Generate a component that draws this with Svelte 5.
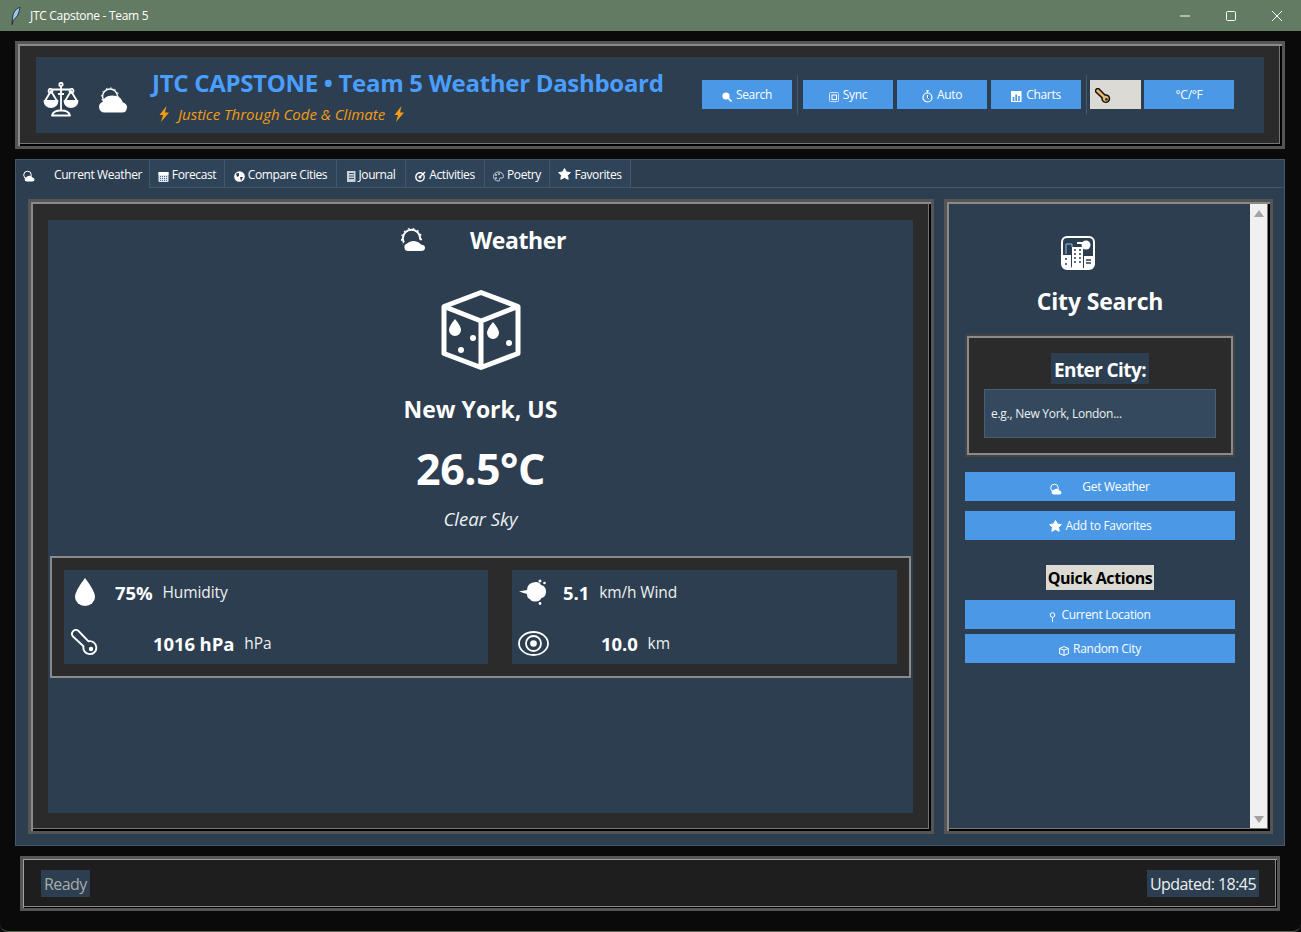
<script>
    const tabs = [
        { label: 'Current Weather', icon: 'weather', active: true },
        { label: 'Forecast', icon: 'calendar' },
        { label: 'Compare Cities', icon: 'globe' },
        { label: 'Journal', icon: 'journal' },
        { label: 'Activities', icon: 'dart' },
        { label: 'Poetry', icon: 'palette' },
        { label: 'Favorites', icon: 'star' }
    ];

    const actions = [
        { label: 'Search', icon: 'search' },
        { sep: true },
        { label: 'Sync', icon: 'sync' },
        { label: 'Auto', icon: 'watch' },
        { label: 'Charts', icon: 'chart' },
        { sep: true, tight: true },
        { key: true },
        { label: '°C/°F' }
    ];
</script>

{#snippet icon(name)}
    {#if name === 'weather'}
        <svg class="ic" width="12" height="12" viewBox="0 0 12 12"><circle cx="4.500" cy="5" r="3.800" fill="none" stroke="#fff"/><path d="M4 11.500a2.200 2.200 0 0 1-.3-4.400Q5 5.200 7.500 5.800 9 6.300 9.500 7.500 11.500 8 11.500 9.700 11.500 11.500 9.500 11.500z" fill="#fff"/></svg>
    {:else if name === 'calendar'}
        <svg class="ic" width="11" height="11" viewBox="0 0 11 11"><rect x=".5" y="1" width="10" height="10" rx="1" fill="#dfe6ee"/><rect x=".5" y="1" width="10" height="3" fill="#fff"/><path d="M2 5.500h7M2 7.500h7M2 9.500h7" stroke="#4d6a88" stroke-dasharray="1 1"/></svg>
    {:else if name === 'globe'}
        <svg class="ic" width="11" height="11" viewBox="0 0 11 11"><circle cx="5.500" cy="5.500" r="5.300" fill="#fff"/><path d="M2 2.500 5 2 5 5 3 6zM6 6l3 0-2 4z" fill="#2c3e50"/></svg>
    {:else if name === 'journal'}
        <svg class="ic" width="9" height="11" viewBox="0 0 9 11"><rect width="8.500" height="11" fill="#c8d0d8"/><path d="M2 2.500h5M2 5h5M2 7.500h5" stroke="#3c4e60"/></svg>
    {:else if name === 'dart'}
        <svg class="ic" width="11" height="11" viewBox="0 0 11 11"><circle cx="5" cy="6" r="4.200" fill="none" stroke="#fff" stroke-width="1.400"/><circle cx="5" cy="6" r="1.500" fill="#fff"/><path d="M5 6 10 1" stroke="#fff" stroke-width="1.200"/></svg>
    {:else if name === 'palette'}
        <svg class="ic" width="11" height="11" viewBox="0 0 11 11"><path d="M5.500 1a5 4.500 0 1 0 0 9q1.500 0 1-1.500-.5-1.500 1-1.500h1.500q1.500 0 1.500-1.500Q10 1 5.500 1z" fill="none" stroke="#ccd"/><circle cx="3" cy="4" r="1" fill="#ccd"/><circle cx="6" cy="3" r="1" fill="#ccd"/><circle cx="3" cy="7" r="1" fill="#ccd"/></svg>
    {:else if name === 'star'}
        <svg class="ic star" width="13" height="12" viewBox="0 0 13 12"><path d="M6.500.5 8.400 4l4 .6-2.900 2.700.7 4-3.700-1.900-3.700 1.900.7-4L.6 4.600l4-.6z" fill="#fff" stroke="#fff" stroke-linejoin="round"/></svg>
    {:else if name === 'search'}
        <svg class="ic" width="10" height="10" viewBox="0 0 10 10"><circle cx="4" cy="4" r="3.600" fill="#fff"/><path d="M6 6l3.500 3.500" stroke="#fff" stroke-width="1.600"/></svg>
    {:else if name === 'sync'}
        <svg class="ic" width="10" height="10" viewBox="0 0 10 10"><rect x=".5" y=".5" width="9" height="9" rx="1" fill="none" stroke="#cfe4fa"/><rect x="3" y="3" width="4.500" height="4.500" fill="none" stroke="#fff"/></svg>
    {:else if name === 'watch'}
        <svg class="ic" width="11" height="13" viewBox="0 0 11 13"><circle cx="5.500" cy="7.500" r="4.500" fill="none" stroke="#fff" stroke-width="1.200"/><path d="M4 .8h3M5.500 1v2M5.500 5v3l1.500 1" stroke="#fff"/></svg>
    {:else if name === 'chart'}
        <svg class="ic" width="11" height="11" viewBox="0 0 11 11"><rect width="10.500" height="11" fill="#fff"/><path d="M2.500 10V6M5.200 10V3.500M8 10V5" stroke="#4a98e6" stroke-width="1.700"/></svg>
    {:else if name === 'pin'}
        <svg class="ic" width="7" height="10" viewBox="0 0 7 10"><circle cx="3.500" cy="3" r="2.300" fill="none" stroke="#fff"/><path d="M3.500 5.500V10" stroke="#fff"/></svg>
    {:else if name === 'cube'}
        <svg class="ic" width="10" height="10" viewBox="0 0 10 10"><path d="M5 .6 9.400 2.400V7.600L5 9.400.6 7.600V2.400zM.6 2.400 5 4.200 9.400 2.400M5 4.200V9.400" fill="none" stroke="#fff"/></svg>
    {:else if name === 'bolt'}
        <svg class="bolt" width="12" height="16" viewBox="0 0 12 16"><path d="M8.500 0 1.500 9H5L3 16 11 6.500H7z" fill="#f39c12"/></svg>
    {:else if name === 'thermo'}
        <svg width="28" height="28" viewBox="0 0 28 28"><path d="M2 7.500a3.900 3.900 0 0 1 5.500-5.500L17.500 12.300a6.500 6.500 0 1 1-5 5z" fill="none" stroke="#fff" stroke-width="1.900" stroke-linejoin="round"/><circle cx="20" cy="20" r="2.200" fill="#fff"/></svg>
    {/if}
{/snippet}

{#snippet cloudBig()}
    <svg width="28" height="26" viewBox="0 0 28 26">
        <circle cx="11" cy="9.500" r="7.500" fill="none" stroke="#fff" stroke-width="1.500"/>
        <circle cx="11" cy="9.500" r="8.600" fill="none" stroke="#fff" stroke-width="1" stroke-dasharray="1.500 3"/>
        <path d="M5.500 25.500a5.500 5.500 0 0 1-2-10.600Q5 9 13 8.500q9 0 11 7 4 1.500 4 4.500 0 5.500-5 5.500z" fill="#fff"/>
    </svg>
{/snippet}

{#snippet cloudSmall()}
    <svg width="26" height="24" viewBox="0 0 26 24">
        <circle cx="11.500" cy="10.500" r="8.700" fill="none" stroke="#fff" stroke-width="2"/>
        <circle cx="11.500" cy="10.500" r="10" fill="none" stroke="#fff" stroke-width="1.200" stroke-dasharray="1.800 3"/>
        <path d="M7 24a6 6 0 0 1-2-10.500Q8 10 14 10q6 .5 8 4 4 1 4 4.500 0 5.500-5 5.500z" fill="#2c3e50"/>
        <path d="M8 23a3.800 3.800 0 0 1-1-7.400Q10 12.500 14 13q5 .5 7 3.500 4 .5 4 3.300 0 3.200-4 3.200z" fill="#fff"/>
    </svg>
{/snippet}

<div class="window">
    <div class="titlebar">
        <svg class="feather" width="10" height="18" viewBox="0 0 10 18"><path d="M9 0Q2 3 1.500 11L1 17.500 2.500 13Q8 9 9 0z" fill="#9ec5ee" stroke="#10202e" stroke-width=".8"/></svg>
        <span class="wintitle">JTC Capstone - Team 5</span>
        <div class="winbtns">
            <span><svg width="10" height="10" viewBox="0 0 10 10"><path d="M0 5h10" stroke="#fff"/></svg></span>
            <span><svg width="10" height="10" viewBox="0 0 10 10"><rect x=".5" y=".5" width="9" height="9" rx="1" fill="none" stroke="#fff"/></svg></span>
            <span><svg width="10" height="10" viewBox="0 0 10 10"><path d="M0 0l10 10M10 0 0 10" stroke="#fff"/></svg></span>
        </div>
    </div>

    <div class="content">
        <header class="frame header">
            <div class="header-panel">
                <svg class="scales" width="36" height="35" viewBox="0 0 36 35">
                    <g fill="none" stroke="#fff" stroke-width="1.800" stroke-linejoin="round">
                        <circle cx="18" cy="2.500" r="1.700"/>
                        <path d="M18 4.500V29M9 7.500h18M9 7.500a2 2 0 1 1-.1-.1M27 7.500a2 2 0 1 0 .1-.1"/>
                        <path d="M2 19 8 9l6 10M22 19l6-10 6 10M15 12h6"/>
                        <path d="M1.500 19a6.500 6 0 0 0 13 0zM21.500 19a6.500 6 0 0 0 13 0z" fill="#fff"/>
                        <path d="M9 33.500q1-5 9-5t9 5z"/>
                    </g>
                </svg>
                <span class="cloud">{@render cloudBig()}</span>
                <div class="brand">
                    <h1>JTC CAPSTONE • Team 5 Weather Dashboard</h1>
                    <p>{@render icon('bolt')}<span>Justice Through Code &amp; Climate</span>{@render icon('bolt')}</p>
                </div>
                <div class="actions">
                    {#each actions as a}
                        {#if a.sep}
                            <i class="sep" class:tight={a.tight}></i>
                        {:else if a.key}
                            <button class="keybtn" aria-label="Temperature">
                                <svg width="16" height="16" viewBox="0 0 28 28"><path d="M2 7.500a3.900 3.900 0 0 1 5.500-5.500L17.500 12.300a6.500 6.500 0 1 1-5 5z" fill="#e9b66a" stroke="#111" stroke-width="2.600" stroke-linejoin="round"/><circle cx="20" cy="20" r="2.500" fill="#1c3a66"/></svg>
                            </button>
                        {:else}
                            <button class="btn">{#if a.icon}{@render icon(a.icon)}{/if}<span>{a.label}</span></button>
                        {/if}
                    {/each}
                </div>
            </div>
        </header>

        <section class="notebook">
            <nav class="tabs">
                {#each tabs as t}
                    <div class="tab" class:active={t.active}>{@render icon(t.icon)}<span>{t.label}</span></div>
                {/each}
            </nav>
            <div class="pane">
                <div class="frame main">
                    <div class="main-panel">
                        <div class="heading">
                            {@render cloudSmall()}
                            <h2>Weather</h2>
                        </div>
                        <svg class="dice" width="80" height="80" viewBox="0 0 80 80">
                            <path d="M40 2.500 77 16.500V63.500L40 77.500 3 63.500V16.500ZM3 16.500 40 31 77 16.500M40 31V77.500" fill="none" stroke="#fff" stroke-width="5" stroke-linejoin="round"/>
                            <path d="M14 29q6 7 6 11a6 6 0 0 1-12 0q0-4 6-11zM52 32q6 7 6 11a6 6 0 0 1-12 0q0-4 6-11z" fill="#fff"/>
                            <circle cx="32" cy="48" r="3" fill="#fff"/><circle cx="20" cy="60" r="3" fill="#fff"/><circle cx="68" cy="53" r="3" fill="#fff"/>
                        </svg>
                        <div class="city">New York, US</div>
                        <div class="temp">26.5°C</div>
                        <div class="cond">Clear Sky</div>

                        <div class="stats">
                            <div class="stat-panel">
                                <div class="stat">
                                    <span class="stat-icon"><svg width="20" height="28" viewBox="0 0 20 28"><path d="M10 0Q0 13 0 19a10 9 0 0 0 20 0Q20 13 10 0z" fill="#fff"/></svg></span>
                                    <b>75%</b><span class="unit">Humidity</span>
                                </div>
                                <div class="stat low">
                                    <span class="stat-icon">{@render icon('thermo')}</span>
                                    <b class="indent">1016 hPa</b><span class="unit">hPa</span>
                                </div>
                            </div>
                            <div class="stat-panel">
                                <div class="stat">
                                    <span class="stat-icon"><svg width="28" height="26" viewBox="0 0 28 26"><path d="M0 12.500 8 11q0-6 6-7.500Q20 2 22 6q5 1 5 6.500t-4.500 6.500q-2 4-6.500 3.500T11 20q-3-.5-3-5z" fill="#fff"/><circle cx="21" cy="2" r="1.500" fill="#fff"/><circle cx="25.500" cy="4" r="1.300" fill="#fff"/><circle cx="21" cy="24.500" r="1.400" fill="#fff"/></svg></span>
                                    <b>5.1</b><span class="unit">km/h Wind</span>
                                </div>
                                <div class="stat low">
                                    <span class="stat-icon"><svg width="31" height="25" viewBox="0 0 31 25"><ellipse cx="15.500" cy="12.500" rx="14.500" ry="11.500" fill="none" stroke="#fff" stroke-width="1.800"/><circle cx="15.500" cy="12.500" r="7.500" fill="none" stroke="#fff" stroke-width="1.800"/><circle cx="15.500" cy="12.500" r="3.300" fill="#fff"/></svg></span>
                                    <b class="indent">10.0</b><span class="unit">km</span>
                                </div>
                            </div>
                        </div>
                    </div>
                </div>

                <aside class="frame side">
                    <div class="side-panel">
                        <svg class="cityicon" width="34" height="34" viewBox="0 0 34 34">
                            <rect x="1" y="1" width="32" height="32" rx="5" fill="#2c3e50" stroke="#fff" stroke-width="2"/>
                            <path d="M11 11h11v21H11zM2 19h8v11q0 2 2 2H2zM23 20h9v10q0 2-2 2h-7z" fill="#fff"/>
                            <path d="M13 14h2M18 14h2M13 18h2M18 18h2M13 22h2M18 22h2M13 26h2M18 26h2M4 23h2M4 28h2M25 24h5M25 27h5" stroke="#2c3e50" stroke-width="1.500"/>
                            <circle cx="25" cy="9" r="4.500" fill="#fff"/><path d="M16 7h6" stroke="#fff" stroke-width="2"/>
                            <path d="M5 18V8h6v3" fill="none" stroke="#8fc3f0"/>
                        </svg>
                        <h2 class="side-title">City Search</h2>
                        <div class="enter">
                            <label for="city">Enter City:</label>
                            <input id="city" type="text" value="e.g., New York, London..." />
                        </div>
                        <button class="btn wide first">{@render icon('weather')}<span class="getw">Get Weather</span></button>
                        <button class="btn wide next">{@render icon('star')}<span>Add to Favorites</span></button>
                        <div class="quick">Quick Actions</div>
                        <button class="btn wide">{@render icon('pin')}<span class="loc">Current Location</span></button>
                        <button class="btn wide close">{@render icon('cube')}<span>Random City</span></button>
                    </div>
                    <div class="scrollbar">
                        <svg width="10" height="7" viewBox="0 0 10 7"><path d="M5 0l5 7H0z" fill="#a3a3a3"/></svg>
                        <svg width="10" height="7" viewBox="0 0 10 7"><path d="M5 7 0 0h10z" fill="#a3a3a3"/></svg>
                    </div>
                </aside>
            </div>
        </section>

        <footer class="frame status">
            <div class="status-in">
                <span class="ready">Ready</span>
                <span class="updated">Updated: 18:45</span>
            </div>
        </footer>
    </div>
</div>

<style>
    :global(body) {
        margin: 0;
        background: #0a0a0a;
    }

    .window {
        box-sizing: border-box;
        width: 1301px;
        height: 932px;
        display: flex;
        flex-direction: column;
        background: #0a0a0a;
        border-bottom: 1px solid #56664f;
        border-radius: 0 0 8px 8px;
        font-family: "Open Sans", "Noto Sans", sans-serif;
        color: #fff;
        overflow: hidden;
    }

    h1, h2, p { margin: 0; }

    .titlebar {
        height: 31px;
        flex: none;
        display: flex;
        align-items: center;
        background: #647b63;
        padding-left: 11px;
    }

    .feather { margin-right: 9px; }

    .wintitle {
        font-size: 12px;
        letter-spacing: -0.3px;
    }

    .winbtns {
        margin-left: auto;
        padding-right: 1px;
        display: flex;
    }

    .winbtns span {
        width: 46px;
        height: 31px;
        display: flex;
        align-items: center;
        justify-content: center;
    }

    .content {
        flex: 1;
        display: flex;
        flex-direction: column;
        gap: 10px;
        padding: 10px 16px 10px 15px;
    }

    .frame {
        box-sizing: border-box;
        border: 3px solid #555;
        box-shadow: inset 2px 2px 0 #8a8a8a, inset -2px -2px 0 #000, inset -3px -3px 0 #777;
        background: #2b2b2b;
    }

    .header {
        height: 108px;
        padding: 13px 18px;
    }

    .header-panel {
        height: 76px;
        background: #2c3e50;
        display: flex;
        align-items: center;
        padding-right: 30px;
    }

    .scales { margin: 9px 0 0 7px; }

    .cloud {
        margin: 10px 0 0 20px;
        display: flex;
    }

    .brand {
        margin-left: 25px;
        align-self: flex-start;
        padding-top: 9px;
    }

    h1 {
        font-size: 24px;
        line-height: 34px;
        font-weight: 700;
        color: #4a9eff;
        letter-spacing: -0.3px;
        white-space: nowrap;
    }

    .brand p {
        display: flex;
        align-items: center;
        gap: 8px;
        padding: 3px 0 0 6px;
        line-height: 22px;
        font-size: 15px;
        font-style: italic;
        color: #f39c12;
        white-space: nowrap;
    }

    .bolt { flex: none; }

    .actions {
        margin: -1px 0 0 auto;
        display: flex;
        align-items: center;
    }

    .sep {
        width: 1px;
        height: 40px;
        background: #46596c;
        margin: 0 5px;
    }

    .sep.tight { margin-right: 3px; }

    .btn {
        width: 90px;
        height: 29px;
        border: 0;
        padding: 0;
        display: inline-flex;
        align-items: center;
        justify-content: center;
        gap: 4px;
        background: #4a98e6;
        color: #fff;
        font-family: inherit;
        font-size: 12px;
        letter-spacing: -0.3px;
        white-space: nowrap;
    }

    .actions .btn + .btn { margin-left: 4px; }

    .ic {
        flex: none;
        position: relative;
        top: 2px;
    }

    .ic.star { top: 0; }

    .keybtn {
        width: 51px;
        height: 29px;
        border: 0;
        padding: 3px 0 0 5px;
        margin-right: 3px;
        background: #dcdad5;
        display: flex;
        align-items: center;
    }

    .notebook {
        height: 687px;
        box-sizing: border-box;
        background: #2c3e50;
        border: 1px solid #44586c;
        display: flex;
        flex-direction: column;
    }

    .tabs {
        height: 28px;
        flex: none;
        display: grid;
        grid-template-columns: 134px 75px 112px 69px 79px 65px 81px;
        box-shadow: inset 0 -1px 0 #44586c;
    }

    .tab {
        box-sizing: border-box;
        display: flex;
        align-items: center;
        justify-content: center;
        gap: 3px;
        padding-top: 1px;
        background: #2f4459;
        border-right: 1px solid #44586c;
        border-bottom: 1px solid #44586c;
        font-size: 12px;
        letter-spacing: -0.4px;
        white-space: nowrap;
    }

    .tab.active {
        background: #2c3e50;
        border-bottom: 0;
        gap: 19px;
        padding-top: 0;
    }

    .pane {
        flex: 1;
        display: grid;
        grid-template-columns: 906px 329px;
        gap: 10px;
        padding: 11px 11px 11px 12px;
    }

    .main {
        padding: 18px 18px 18px 17px;
    }

    .main-panel {
        height: 593px;
        background: #2c3e50;
        display: flex;
        flex-direction: column;
        align-items: center;
    }

    .heading {
        height: 40px;
        display: flex;
        align-items: center;
        gap: 44px;
        padding-left: 5px;
    }

    .heading h2 {
        font-size: 23px;
        font-weight: 700;
        letter-spacing: -0.4px;
    }

    .dice { margin-top: 30px; }

    .city {
        margin-top: 23px;
        line-height: 32px;
        font-size: 23px;
        font-weight: 700;
    }

    .temp {
        margin-top: 14px;
        line-height: 60px;
        font-size: 43px;
        font-weight: 700;
        letter-spacing: -0.5px;
    }

    .cond {
        line-height: 26px;
        margin-top: 7px;
        font-size: 18.5px;
        font-style: italic;
        color: #ecf0f1;
    }

    .stats {
        box-sizing: border-box;
        align-self: stretch;
        margin: 24px 2px 0;
        padding: 12px;
        height: 122px;
        border: 2px solid #8a8a8a;
        background: #2b2b2b;
        display: grid;
        grid-template-columns: 424px 385px;
        gap: 24px;
    }

    .stat-panel {
        background: #2c3e50;
        padding-left: 5px;
        display: grid;
        grid-template-rows: 44px 50px;
    }

    .stat {
        display: flex;
        align-items: center;
    }

    .stat.low { padding-top: 8px; }

    .stat-icon {
        width: 32px;
        margin-right: 14px;
        display: flex;
        justify-content: center;
    }

    .stat b {
        font-size: 18.5px;
        font-weight: 700;
        letter-spacing: -0.1px;
    }

    .stat b.indent { margin-left: 38px; }

    .unit {
        margin-left: 10px;
        font-size: 15.5px;
        color: #ecf0f1;
        letter-spacing: -0.1px;
    }

    .side {
        display: grid;
        grid-template-columns: 1fr 17px;
        padding: 2px 3px 3px 2px;
        background: #2c3e50;
    }

    .side-panel {
        display: flex;
        flex-direction: column;
        align-items: center;
        padding: 32px 15px 0 16px;
    }

    .cityicon { margin-right: 44px; }

    .side-title {
        margin-top: 11px;
        line-height: 40px;
        font-size: 23px;
        font-weight: 700;
        letter-spacing: -0.15px;
    }

    .enter {
        box-sizing: border-box;
        width: 266px;
        height: 119px;
        margin-top: 15px;
        padding-top: 15px;
        border: 2px solid #8a8a8a;
        box-shadow: 0 0 0 2px #444;
        background: #2b2b2b;
        display: flex;
        flex-direction: column;
        align-items: center;
        gap: 5px;
    }

    .enter label {
        height: 31px;
        line-height: 34px;
        padding: 0 3px;
        background: #2c3e50;
        font-size: 19px;
        font-weight: 700;
        letter-spacing: -0.6px;
    }

    .enter input {
        box-sizing: border-box;
        width: 232px;
        height: 49px;
        padding: 0 6px;
        border: 1px solid #4a5e72;
        background: #34495e;
        color: #ecf0f1;
        font-family: inherit;
        font-size: 12px;
        letter-spacing: -0.27px;
    }

    .btn.wide {
        width: 270px;
        flex: none;
    }

    .btn.first { margin-top: 17px; }

    .btn.next { margin-top: 10px; }

    .btn.close { margin-top: 5px; }

    .getw { margin-left: 16px; }

    .loc { margin-left: 1px; }

    .quick {
        margin: 25px 0 10px;
        height: 25px;
        line-height: 27px;
        padding: 0 2px;
        background: #dcdad5;
        color: #000;
        font-size: 16px;
        font-weight: 700;
        letter-spacing: -0.4px;
    }

    .scrollbar {
        background: #f0f0f0;
        display: flex;
        flex-direction: column;
        justify-content: space-between;
        align-items: center;
        padding: 6px 0 5px;
    }

    .status {
        height: 55px;
        margin: 0 5px;
        box-shadow: inset 1px 1px 0 #a0a0a0, inset -1px -1px 0 #000, inset -2px -2px 0 #8a8a8a;
        background: #1e1e1e;
    }

    .status-in {
        height: 49px;
        display: flex;
        justify-content: space-between;
        align-items: center;
        padding: 0 18px;
        font-size: 16px;
        letter-spacing: -0.55px;
    }

    .ready, .updated {
        height: 27px;
        line-height: 28px;
        padding: 0 3px;
        background: #2c3e50;
    }

    .ready { color: #aaa; }

    .updated { color: #ecf0f1; }
</style>
